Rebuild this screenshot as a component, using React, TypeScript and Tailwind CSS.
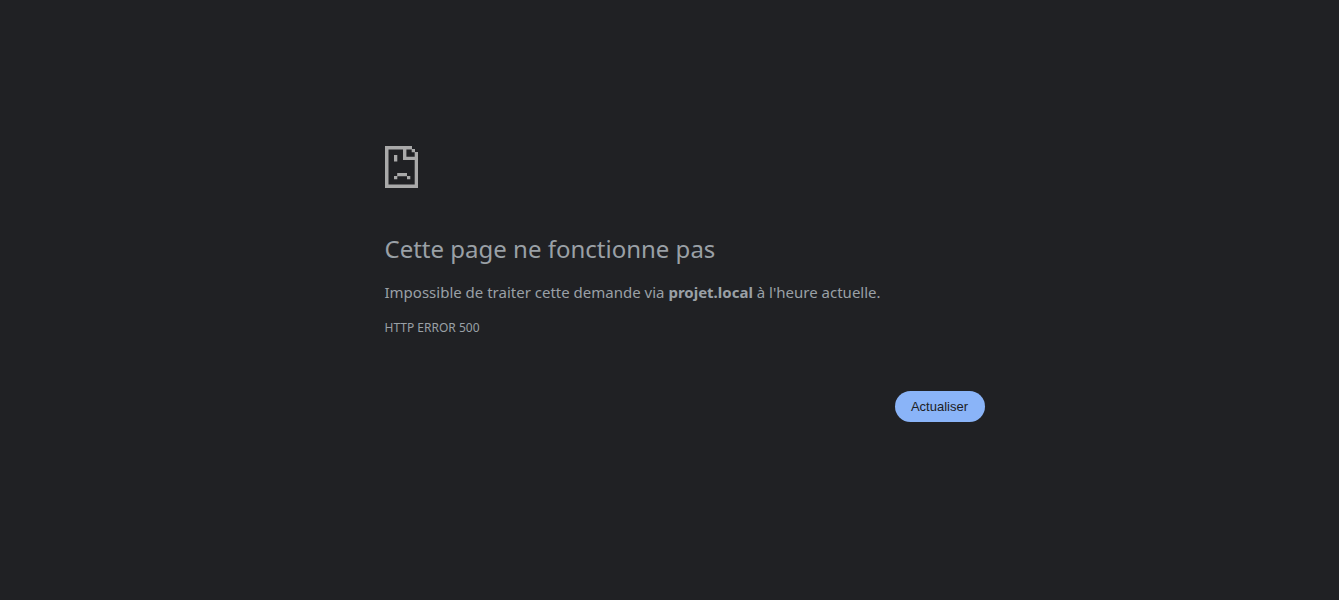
function SadPageIcon() {
  return (
    <svg width="33" height="42" viewBox="0 0 33 42" fill="#a9a9a9" className="ml-[0.5px] block">
      <path d="M0 0h27v3.5H3.5v35H29.7V6H33v36H0z" />
      <path d="M26.7 3h3.3v3.3h-3.3zM18 3h3.4v7.7H30V14H18z" />
      <path d="M9 9h3.3v6.4H9zM12.2 27h9.8v3.3h-9.8zM9 30h3.3v3.3H9zM22 30h3.3v3.3H22z" />
    </svg>
  );
}

export default function App() {
  return (
    <div className="h-[600px] overflow-hidden bg-[#202124] pt-[146px] pl-[384.5px] font-['Noto_Sans',sans-serif] text-[15px] text-[#9aa0a6]">
      <div className="w-[600px]">
        <SadPageIcon />
        <h1 className="mt-[46px] text-[24px] leading-[30px] font-normal">Cette page ne fonctionne pas</h1>
        <p className="mt-[16px] text-[15px] leading-[25px]">
          Impossible de traiter cette demande via <strong className="font-bold">projet.local</strong> à l'heure actuelle.
        </p>
        <div className="mt-[15px] text-[12px] leading-[16px] uppercase">HTTP ERROR 500</div>
        <div className="mt-[55px] flex justify-end">
          <button
            type="button"
            className="h-[31px] w-[90px] rounded-[16px] bg-[#8ab4f8] font-['Liberation_Sans',sans-serif] text-[13px] text-[#202124]"
          >
            Actualiser
          </button>
        </div>
      </div>
    </div>
  );
}
